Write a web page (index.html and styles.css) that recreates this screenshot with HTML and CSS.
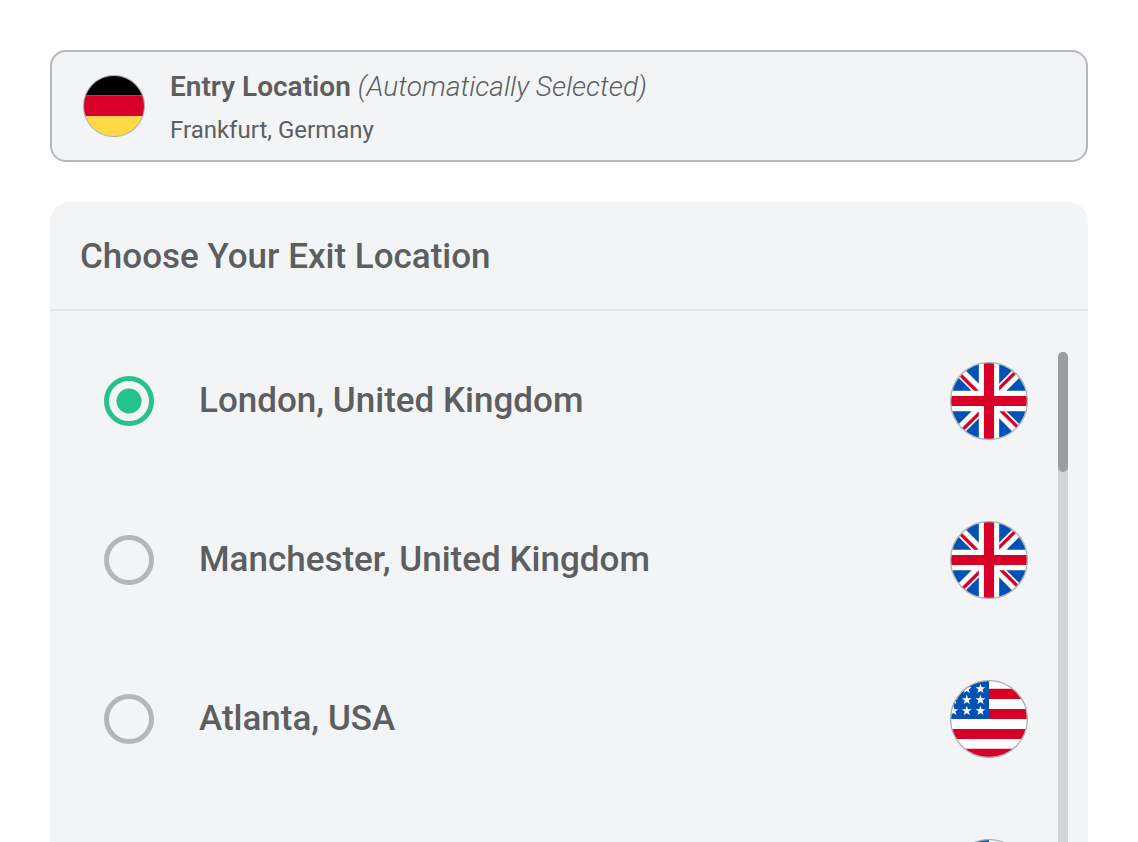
FILE: index.html
```html
<!DOCTYPE html>
<html lang="en">
<head>
<meta charset="utf-8">
<meta name="viewport" content="width=device-width, initial-scale=1">
<title>Choose Your Exit Location</title>
<link rel="stylesheet" href="styles.css">
</head>
<body>
<svg class="defs" aria-hidden="true">
  <defs>
    <clipPath id="disc"><circle cx="256" cy="256" r="252"/></clipPath>
    <path id="star" d="M0-33 8-10H32L13 5 20 28 0 14-20 28-13 5-32-10H-8Z"/>
    <g id="arm">
      <path fill="#0052b4" d="M-30 189.200H142L-30 17.200ZM189.200-30V142L17.200-30Z"/>
    </g>
    <symbol id="uk" viewBox="0 0 512 512">
      <g clip-path="url(#disc)">
        <path fill="#fff" d="M0 0H512V512H0Z"/>
        <use href="#arm"/>
        <use href="#arm" transform="rotate(90 256 256)"/>
        <use href="#arm" transform="rotate(180 256 256)"/>
        <use href="#arm" transform="rotate(270 256 256)"/>
        <path fill="#d80027" d="M0 222.600H222.600V0H289.400V222.600H512V289.400H289.400V512H222.600V289.400H0ZM322.800 322.800 437 437 452 420.600 354.300 322.800ZM189.200 322.800 75 437 91.400 452 189.200 354.300ZM189.200 189.200 75 75 60 91.400 157.700 189.200ZM322.800 189.200 437 75 420.600 60 322.800 157.700Z"/>
      </g>
      <circle class="rim" cx="256" cy="256" r="252"/>
    </symbol>
    <symbol id="us" viewBox="0 0 512 512">
      <g clip-path="url(#disc)">
        <path fill="#fff" d="M0 0H512V512H0Z"/>
        <path fill="#d80027" d="M245 58H512V125H245ZM245 191H512V256H245ZM0 321H512V388H0ZM0 452H512V512H0Z"/>
        <path fill="#0052b4" d="M0 0H256V256H0Z"/>
        <g fill="#fff">
          <use href="#star" x="110" y="58"/><use href="#star" x="200" y="58"/>
          <use href="#star" x="22" y="130"/><use href="#star" x="110" y="130"/><use href="#star" x="200" y="130"/>
          <use href="#star" x="22" y="202"/><use href="#star" x="110" y="202"/><use href="#star" x="200" y="202"/>
        </g>
      </g>
      <circle class="rim" cx="256" cy="256" r="252"/>
    </symbol>
    <symbol id="de" viewBox="0 0 512 512">
      <g clip-path="url(#disc)">
        <path fill="#000" d="M0 0H512V167H0Z"/>
        <path fill="#d80027" d="M0 167H512V341H0Z"/>
        <path fill="#ffda44" d="M0 341H512V512H0Z"/>
      </g>
      <circle class="rim" cx="256" cy="256" r="252"/>
    </symbol>
  </defs>
</svg>
<main class="page">
  <section class="entry">
    <svg class="entry-flag" role="img" aria-label="Germany"><use href="#de"/></svg>
    <div class="entry-text">
      <p class="entry-title"><strong>Entry Location</strong> <em>(Automatically Selected)</em></p>
      <p class="entry-place">Frankfurt, Germany</p>
    </div>
  </section>
  <section class="panel">
    <h1 class="panel-title">Choose Your Exit Location</h1>
    <div class="panel-body">
      <div class="options">
        <label class="option"><input class="radio" type="radio" name="exit" checked><span class="option-name">London, United Kingdom</span><svg class="flag" aria-hidden="true"><use href="#uk"/></svg></label>
        <label class="option"><input class="radio" type="radio" name="exit"><span class="option-name">Manchester, United Kingdom</span><svg class="flag" aria-hidden="true"><use href="#uk"/></svg></label>
        <label class="option"><input class="radio" type="radio" name="exit"><span class="option-name">Atlanta, USA</span><svg class="flag" aria-hidden="true"><use href="#us"/></svg></label>
        <div class="option"><span class="option-name"></span><svg class="flag" aria-hidden="true"><use href="#us"/></svg></div>
      </div>
      <div class="track"><div class="thumb"></div></div>
    </div>
  </section>
</main>
</body>
</html>
```
FILE: styles.css
```css
* { box-sizing: border-box; }

body {
  margin: 0;
  background: #fff;
  color: #5c5e60;
  font-family: Roboto, "Liberation Sans", sans-serif;
}

.defs { position: absolute; width: 0; height: 0; }

.rim { fill: none; stroke: #b0b2b5; stroke-width: 9; }

.page {
  display: flex;
  flex-direction: column;
  gap: 40px;
  height: 100vh;
  padding: 50px 50px 0;
  overflow: hidden;
}

.entry {
  display: flex;
  flex: none;
  align-items: center;
  gap: 25px;
  padding: 11px 31px;
  border: 2px solid #b5b8bb;
  border-radius: 16px;
  background: #f3f4f6;
}

.entry-flag { flex: none; width: 62px; height: 62px; }

.entry-text {
  display: flex;
  flex-direction: column;
  gap: 4px;
  padding-top: 4px;
}

.entry-title, .entry-place { margin: 0; }
.entry-title { font-size: 28px; line-height: 40px; }
.entry-title strong { font-weight: 600; }
.entry-title em { font-weight: 300; }
.entry-place { font-size: 24px; line-height: 38px; }

.panel {
  flex: none;
  border-radius: 20px 20px 0 0;
  background: #f3f4f6;
}

.panel-title {
  margin: 0;
  padding: 31px 30px 28px;
  border-bottom: 2px solid #e2e4e6;
  font-size: 35px;
  font-weight: 500;
  line-height: 48px;
}

.panel-body {
  display: flex;
  gap: 30px;
  padding: 10px 20px 0 54px;
}

.options { flex: 1; }

.option {
  display: flex;
  align-items: center;
  height: 159px;
}

.radio {
  flex: none;
  appearance: none;
  width: 50px;
  height: 50px;
  margin: 0 45px 0 0;
  border: 5px solid #b2b7b9;
  border-radius: 50%;
}

.radio:checked {
  border-color: #27c28c;
  background: radial-gradient(circle, #27c28c 12px, transparent 13px);
}

.option-name {
  flex: 1;
  font-size: 35px;
  font-weight: 500;
  line-height: 48px;
}

.flag { flex: none; width: 78px; height: 78px; }

.track {
  width: 10px;
  margin-top: 31px;
  border-radius: 5px;
  background: #d2d5d8;
}

.thumb {
  height: 120px;
  border-radius: 5px;
  background: #9c9d9f;
}
```
